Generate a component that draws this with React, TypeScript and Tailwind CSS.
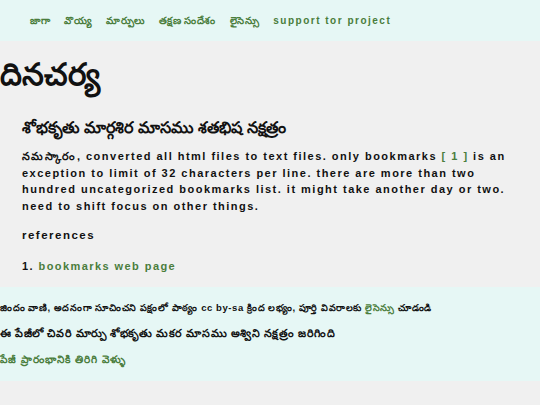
const green = 'text-[#4a7d3c]';

const navItems = ['జాగా', 'వొయ్య', 'మార్పులు', 'తక్షణ సందేశం', 'లైసెన్సు'];

export default function App() {
    return (
        <div className="min-h-[405px] w-[540px] bg-[#f0f0f0] text-[#111] font-['Liberation_Sans',sans-serif] font-bold">
            <header className="h-[41px] bg-[#e6f7f5] flex items-center pl-[30px] gap-[14px]">
                {navItems.map((item) => (
                    <a key={item} className={`${green} text-[10px] tracking-[0.05em] leading-none`}>
                        {item}
                    </a>
                ))}
                <a className={`${green} text-[10px] tracking-[0.15em] leading-none`}>support tor project</a>
            </header>

            <main className="pb-[12px]">
                <h1 className="text-[31px] leading-none pt-[18px] pb-[30px]">దినచర్య</h1>
                <div className="px-[22px]">
                    <h2 className="text-[16px] leading-none mb-[12px]">శోభకృతు మార్గశిర మాసము శతభిష నక్షత్రం</h2>
                    <p className="text-[11px] leading-[16.5px] tracking-[0.135em]">
                        నమస్కారం, converted all html files to text files. only bookmarks{' '}
                        <a className={green}>[ 1 ]</a> is an exception to limit of 32 characters per line. there are
                        more than two hundred uncategorized bookmarks list. it might take another day or two. need to
                        shift focus on other things.
                    </p>
                    <h3 className="text-[11.5px] tracking-[0.13em] mt-[13px] mb-[14px]">references</h3>
                    <ol className="text-[11px] tracking-[0.13em]">
                        <li>
                            1. <a className={green}>bookmarks web page</a>
                        </li>
                    </ol>
                </div>
            </main>

            <footer className="bg-[#e6f7f5] h-[94px] flex flex-col justify-center gap-[15px] leading-none">
                <p className="text-[9.5px] tracking-[0.06em]">
                    జిందం వాణి, అదనంగా సూచించని పక్షంలో పాఠ్యం cc by-sa క్రింద లభ్యం, పూర్తి వివరాలకు{' '}
                    <a className={green}>లైసెన్సు</a> చూడండి
                </p>
                <p className="text-[11px] tracking-[0.05em]">ఈ పేజీలో చివరి మార్పు శోభకృతు మకర మాసము అశ్విని నక్షత్రం జరిగింది</p>
                <p className={`${green} text-[10.5px] tracking-[0.1em]`}>పేజీ ప్రారంభానికి తిరిగి వెళ్ళు</p>
            </footer>
        </div>
    );
}
